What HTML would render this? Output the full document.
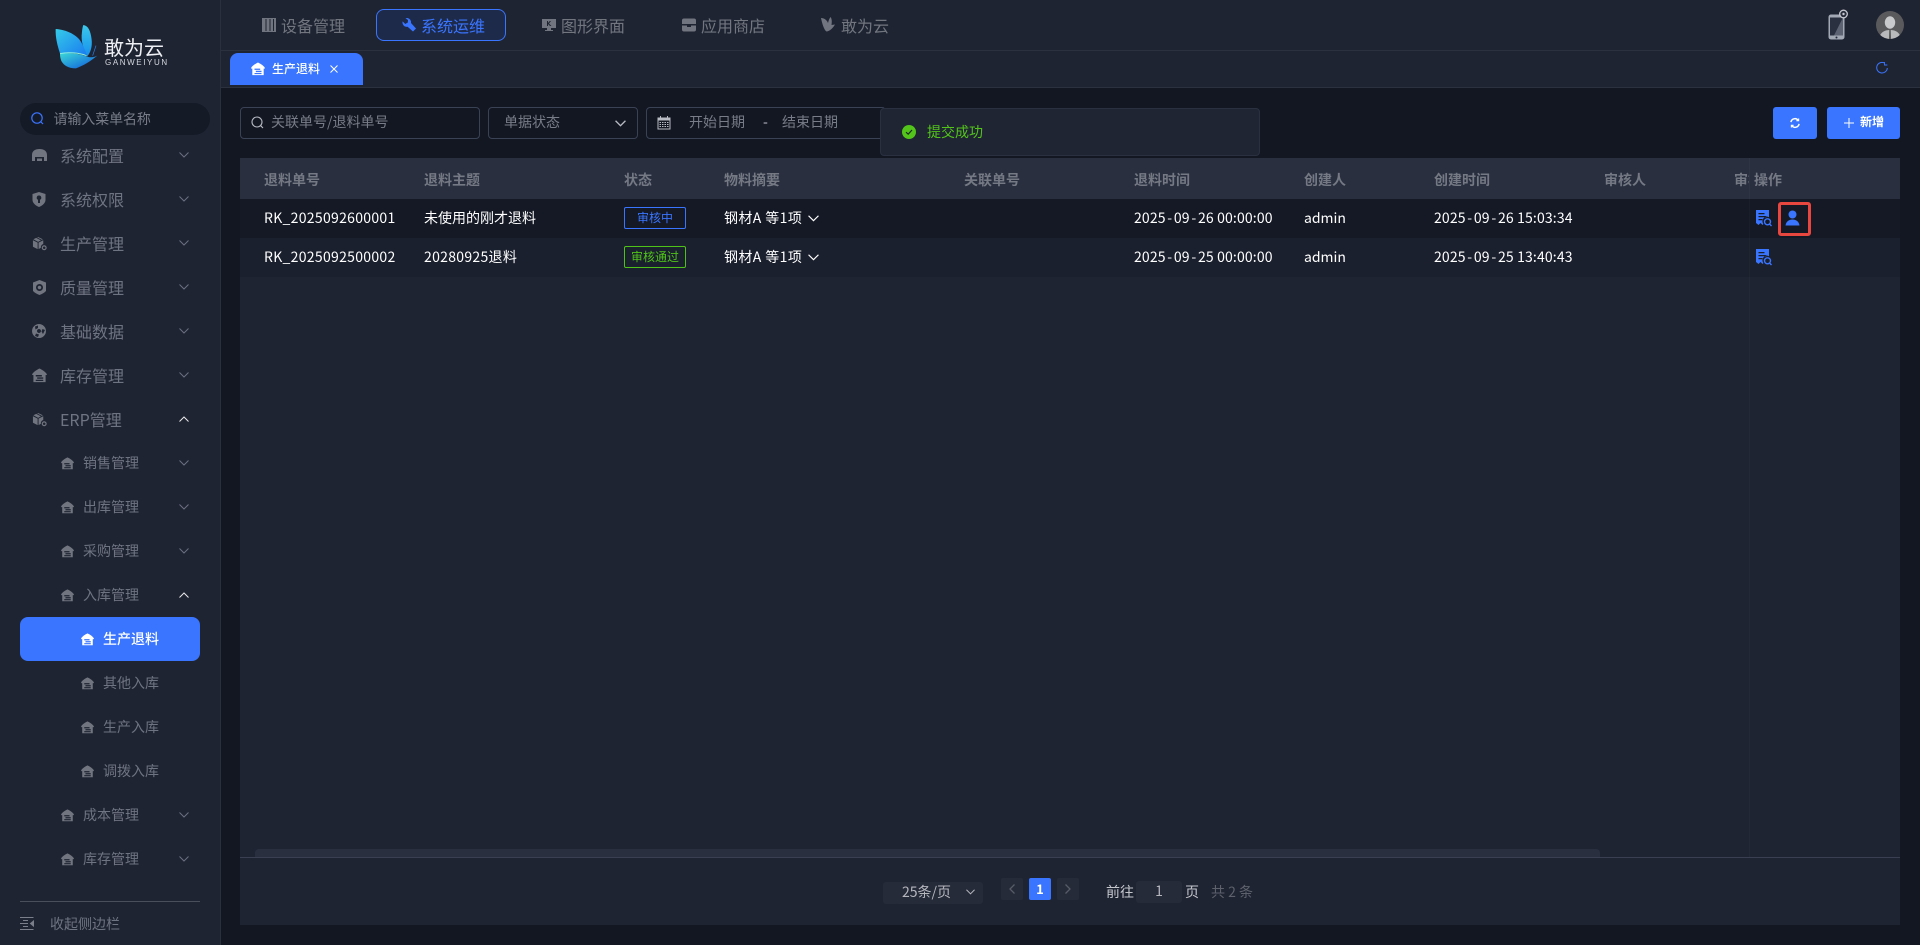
<!DOCTYPE html>
<html lang="zh-CN">
<head>
<meta charset="utf-8">
<title>生产退料</title>
<style>
html,body{margin:0;padding:0;width:1920px;height:945px;overflow:hidden;background:#131722;font-family:"Noto Sans CJK SC","Liberation Sans",sans-serif;font-size:14px;color:#fff}
div,span,svg{position:absolute;box-sizing:border-box}
i{font-style:normal;padding:0 1.6px}
.t{white-space:nowrap;line-height:20px;height:20px}
.m{color:#6f7482}
.m16{font-size:16px;color:#6f7482;left:60px}
.m14{font-size:14px;color:#6f7482;left:83px}
.h{font-size:14px;color:#747984;top:170px;font-weight:700}
.r{font-size:14px;color:#fff}
.dt{letter-spacing:.15px}
.ls{letter-spacing:.3px}
.n{font-size:16px;color:#71767f;top:15px}
.ph{color:#777c88}
svg{overflow:visible}
.ch{fill:none;stroke:#6b7080;stroke-width:1;width:10px;height:6px}
.ic{fill:#71757f}
.tag{height:22px;line-height:20px;font-size:12px;text-align:center;border-radius:2px;left:624px;width:62px;border:1px solid}
.inp{border:1px solid #3a4256;border-radius:4px;height:32px;top:107px}
.btn{background:#3a75ff;border-radius:3px;height:32px;top:107px}
</style>
</head>
<body>
<svg width="0" height="0" style="left:0;top:0">
<defs>
<symbol id="home" viewBox="0 0 16 16"><path fill-rule="evenodd" d="M8 0.5 C10 1.5 14 3.5 15.8 6.5 L15.8 7.5 L14.5 7.5 L14.5 15 L1.5 15 L1.5 7.5 L0.2 7.5 L0.2 6.5 C2 3.5 6 1.5 8 0.5Z M4 7.5 L4 9 L10.5 9 L10.5 7.5Z M5.5 10 L5.5 11.5 L12 11.5 L12 10Z M4 12.5 L4 13.8 L12 13.8 L12 12.5Z"/></symbol>
<symbol id="box" viewBox="0 0 16 16"><path d="M1 4.5 L6 7 L6 14 L1 11.5Z M7 7 L12 4.5 L12 8.5 A3.5 3.5 0 0 0 9.5 12.5 L7 14Z M1.5 3.5 L4.5 2 L9.5 4.6 L6.5 6.2Z M5.5 1.5 L6.5 1 L11.5 3.5 L10.5 4.1Z"/><circle cx="13" cy="12.5" r="2" fill="none" stroke="currentColor" stroke-width="1.3"/></symbol>
<symbol id="doc" viewBox="0 0 16 17"><path fill="#3a75ff" fill-rule="evenodd" d="M0 0 L13 0 L13 7.2 A4.5 4.5 0 0 0 7.4 14 L6.5 15 L4.5 13 L2.5 15 L0 13Z M2.5 3 L2.5 4.3 L8.5 4.3 L8.5 3Z M2.5 6 L2.5 7.3 L10.5 7.3 L10.5 6Z M2.5 9 L2.5 10.3 L6.5 10.3 L6.5 9Z"/><circle cx="11.5" cy="11.8" r="3" fill="none" stroke="#3a75ff" stroke-width="1.4"/><path d="M13.6 14 L15.5 16" stroke="#3a75ff" stroke-width="1.4"/></symbol>
<symbol id="cd" viewBox="0 0 10 6"><path d="M0.5 0.5 L5 5 L9.5 0.5"/></symbol>
<symbol id="cu" viewBox="0 0 10 6"><path d="M0.5 5.5 L5 1 L9.5 5.5"/></symbol>
<linearGradient id="g1" x1="0" y1="0" x2="1" y2="1"><stop offset="0" stop-color="#35cbe8"/><stop offset="1" stop-color="#1a7cf0"/></linearGradient>
<linearGradient id="g2" x1="0" y1="0" x2="0" y2="1"><stop offset="0" stop-color="#3cc8ea"/><stop offset="1" stop-color="#1590ee"/></linearGradient>
<linearGradient id="g3" x1="0" y1="0" x2="1" y2="1"><stop offset="0" stop-color="#3bd8d8"/><stop offset="1" stop-color="#0d55dc"/></linearGradient>
</defs>
</svg>

<!-- sidebar -->
<div style="left:0;top:0;width:221px;height:945px;background:#1f2433;border-right:1px solid #2b3040"></div>
<svg style="left:40px;top:15px" width="140" height="70" viewBox="0 0 420 210">
<path fill="url(#g2)" d="M130 30 C145 32 152 48 155 75 C157 95 152 112 142 124 C132 105 124 85 125 62 C126 48 127 38 130 30Z"/>
<path fill="url(#g1)" d="M47 42 C80 44 112 60 124 82 C132 98 138 110 140 120 C112 112 82 112 60 115 C52 92 46 66 47 42Z"/>
<path fill="url(#g3)" d="M60 116 C85 112 118 116 140 124 C150 128 160 128 172 122 C150 140 130 152 108 160 C85 160 72 152 64 138 C61 130 60 124 60 116Z"/>
<path d="M60 116 C85 110 118 114 140 122" stroke="#8ff0e2" stroke-width="3" fill="none"/>
<path d="M158 122 L168 92" stroke="#2a7fe8" stroke-width="2" fill="none"/>
</svg>
<span class="t" style="left:104px;top:33px;font-size:20px;line-height:28px;height:28px;color:#eef0f4">敢为云</span>
<span class="t" style="left:105px;top:58px;font-size:8px;line-height:10px;height:10px;letter-spacing:1.6px;color:#d5d8de;font-family:'Liberation Sans',sans-serif">GANWEIYUN</span>

<div style="left:20px;top:103px;width:190px;height:32px;border-radius:16px;background:#151a27"></div>
<svg style="left:31px;top:112px" width="13" height="13" viewBox="0 0 13 13" fill="none" stroke="#3a75ff" stroke-width="1.2"><circle cx="6" cy="6" r="5.2"/><path d="M10 10 L12 12"/></svg>
<span class="t ph" style="left:53.5px;top:109px;letter-spacing:-.1px">请输入菜单名称</span>

<!-- top-level menu -->
<svg class="ic" style="left:32px;top:149px" width="15" height="14" viewBox="0 0 15 14"><path fill-rule="evenodd" d="M0 12 L0 6 C0 2 3 0 7.5 0 C12 0 15 2 15 6 L15 12 L12 12 L12 8 L3 8 L3 12Z M5 9.5 L10 9.5 L10 12 L5 12Z"/></svg>
<span class="t m16" style="top:145px">系统配置</span>
<svg class="ch" style="left:179px;top:152px"><use href="#cd"/></svg>

<svg class="ic" style="left:32px;top:192px" width="14" height="15" viewBox="0 0 14 15"><path fill-rule="evenodd" d="M7 0 L13.5 2 L13.5 8 C13.5 11 10 14 7 15 C4 14 0.5 11 0.5 8 L0.5 2Z M7 3.5 A2.2 2.2 0 0 0 6 7.7 L6 11 L8 11 L8 7.7 A2.2 2.2 0 0 0 7 3.5Z"/></svg>
<span class="t m16" style="top:189px">系统权限</span>
<svg class="ch" style="left:179px;top:196px"><use href="#cd"/></svg>

<svg class="ic" style="left:32px;top:236px;color:#71757f" width="15" height="15"><use href="#box"/></svg>
<span class="t m16" style="top:233px">生产管理</span>
<svg class="ch" style="left:179px;top:240px"><use href="#cd"/></svg>

<svg class="ic" style="left:33px;top:280px" width="13" height="15" viewBox="0 0 13 15"><path fill-rule="evenodd" d="M6.5 0 L13 2.5 L13 11 C11 13 9 14 6.5 15 C4 14 2 13 0 11 L0 2.5Z M6.5 4 A3.5 3.5 0 1 0 6.51 4Z M6.5 5.7 A1.8 1.8 0 1 1 6.49 5.7Z"/></svg>
<span class="t m16" style="top:277px">质量管理</span>
<svg class="ch" style="left:179px;top:284px"><use href="#cd"/></svg>

<svg class="ic" style="left:32px;top:324px" width="14" height="14" viewBox="0 0 14 14"><path fill-rule="evenodd" d="M7 0 A7 7 0 1 0 7.01 0Z M7 5 A2 2 0 1 1 6.99 5Z M3 2.5 L6 1.5 L6 4 L3.5 5.5Z M13 6 L10.5 5 L9.5 7.5 L11 10Z M3 12 L6 13 L7 10.5 L4 9.5Z"/></svg>
<span class="t m16" style="top:321px">基础数据</span>
<svg class="ch" style="left:179px;top:328px"><use href="#cd"/></svg>

<svg class="ic" style="left:32px;top:368px" width="15" height="15"><use href="#home"/></svg>
<span class="t m16" style="top:365px">库存管理</span>
<svg class="ch" style="left:179px;top:372px"><use href="#cd"/></svg>

<svg class="ic" style="left:32px;top:412px;color:#71757f" width="15" height="15"><use href="#box"/></svg>
<span class="t m16" style="top:409px">ERP管理</span>
<svg class="ch" style="left:179px;top:416px;stroke:#e8e8ea"><use href="#cu"/></svg>

<!-- second level -->
<svg class="ic" style="left:61px;top:457px" width="13" height="13"><use href="#home"/></svg>
<span class="t m14" style="top:453px">销售管理</span>
<svg class="ch" style="left:179px;top:460px"><use href="#cd"/></svg>

<svg class="ic" style="left:61px;top:501px" width="13" height="13"><use href="#home"/></svg>
<span class="t m14" style="top:497px">出库管理</span>
<svg class="ch" style="left:179px;top:504px"><use href="#cd"/></svg>

<svg class="ic" style="left:61px;top:545px" width="13" height="13"><use href="#home"/></svg>
<span class="t m14" style="top:541px">采购管理</span>
<svg class="ch" style="left:179px;top:548px"><use href="#cd"/></svg>

<svg class="ic" style="left:61px;top:589px" width="13" height="13"><use href="#home"/></svg>
<span class="t m14" style="top:585px">入库管理</span>
<svg class="ch" style="left:179px;top:592px;stroke:#e8e8ea"><use href="#cu"/></svg>

<!-- third level -->
<div style="left:20px;top:617px;width:180px;height:44px;background:#3a75ff;border-radius:8px"></div>
<svg style="left:81px;top:633px;fill:#fff" width="13" height="13"><use href="#home"/></svg>
<span class="t" style="left:103px;top:629px;color:#fff;font-weight:500">生产退料</span>

<svg class="ic" style="left:81px;top:677px" width="13" height="13"><use href="#home"/></svg>
<span class="t m" style="left:103px;top:673px">其他入库</span>
<svg class="ic" style="left:81px;top:721px" width="13" height="13"><use href="#home"/></svg>
<span class="t m" style="left:103px;top:717px">生产入库</span>
<svg class="ic" style="left:81px;top:765px" width="13" height="13"><use href="#home"/></svg>
<span class="t m" style="left:103px;top:761px">调拨入库</span>

<svg class="ic" style="left:61px;top:809px" width="13" height="13"><use href="#home"/></svg>
<span class="t m14" style="top:805px">成本管理</span>
<svg class="ch" style="left:179px;top:812px"><use href="#cd"/></svg>
<svg class="ic" style="left:61px;top:853px" width="13" height="13"><use href="#home"/></svg>
<span class="t m14" style="top:849px">库存管理</span>
<svg class="ch" style="left:179px;top:856px"><use href="#cd"/></svg>

<div style="left:20px;top:901px;width:180px;height:1px;background:#4a4f5c"></div>
<svg style="left:20px;top:917px" width="14" height="13" viewBox="0 0 14 13" fill="none" stroke="#7a7f8b" stroke-width="1"><path d="M0 .5 H13.5 M0 6.5 H8 M0 12.5 H13.5 M3 3.5 H8 M3 9.5 H8"/><path d="M13.5 4 L10.5 6.5 L13.5 9Z" fill="#7a7f8b"/></svg>
<span class="t m" style="left:50px;top:914px">收起侧边栏</span>

<!-- top bar -->
<div style="left:221px;top:0;width:1699px;height:87px;background:#1f2433"></div>
<div style="left:221px;top:50px;width:1699px;height:1px;background:#2c3140"></div>
<div style="left:221px;top:87px;width:1699px;height:1px;background:#2c3140"></div>

<svg class="ic" style="left:262px;top:18px" width="14" height="14" viewBox="0 0 14 14"><path fill-rule="evenodd" d="M0 0 H14 V14 H0Z M3.5 1 V13 H4.5 V1Z M7.5 1 V13 H8.5 V1Z M11 1 V13 H12 V1Z"/></svg>
<span class="t n" style="left:281px">设备管理</span>

<div style="left:376px;top:9px;width:130px;height:32px;border:1px solid #3a75ff;border-radius:8px;background:#1e2a49"></div>
<svg style="left:402px;top:18px" width="14" height="14" viewBox="0 0 14 14"><path fill="#3a75ff" d="M5.5 0 A4.4 4.4 0 0 1 9 5 L14 10.5 L11 13.5 L5.6 8.8 A4.4 4.4 0 0 1 .6 3.4 L3.3 6 L5.8 4.5 L6 2 L3.5 .4 A4 4 0 0 1 5.5 0Z"/></svg>
<span class="t n" style="left:421px;color:#3a75ff">系统运维</span>

<svg class="ic" style="left:542px;top:18px" width="14" height="14" viewBox="0 0 14 14"><path fill-rule="evenodd" d="M0 1 H14 V10 H9 V12 H11 V13 H3 V12 H5 V10 H0Z M5 3 V8 H6 V6 L8 8 H9.5 L7 5.5 L9 3 H7.8 L6 5 V3Z"/></svg>
<span class="t n" style="left:561px">图形界面</span>

<svg class="ic" style="left:682px;top:18px" width="14" height="14" viewBox="0 0 14 14"><path d="M2 0.5 H12 A2 2 0 0 1 14 2.5 V6 H0 V2.5 A2 2 0 0 1 2 0.5Z M0 7.5 H5 V9 H9 V7.5 H14 V11.5 A2 2 0 0 1 12 13.5 H2 A2 2 0 0 1 0 11.5Z"/></svg>
<span class="t n" style="left:701px">应用商店</span>

<svg class="ic" style="left:821px;top:17px" width="15" height="15" viewBox="0 0 15 15"><path d="M0 1 C3 1 6 3 7 6 C7.5 4 8 2 9.5 0 C11 2 11 5 10.5 8 L14 7.5 C12 11 9 14 5.5 14.5 C3 13 1 6 0 1Z"/></svg>
<span class="t n" style="left:841px">敢为云</span>

<svg style="left:1827px;top:10px" width="22" height="31" viewBox="0 0 22 31"><rect x="1.5" y="4.5" width="16" height="25" rx="2.5" fill="#a3a8b5"/><rect x="3" y="7.5" width="13" height="18" fill="#2a3040"/><path d="M16 7.5 V25.5 H7Z" fill="#5d6372"/><circle cx="9.5" cy="27.5" r="1" fill="#22283a"/><circle cx="16.5" cy="4" r="3.8" fill="#2a2f3d" stroke="#c5c8cf" stroke-width="1.3"/><circle cx="16.5" cy="4" r="1.2" fill="#c5c8cf"/></svg>
<svg style="left:1876px;top:11px" width="28" height="28" viewBox="0 0 28 28"><defs><clipPath id="av"><circle cx="14" cy="14" r="14"/></clipPath></defs><circle cx="14" cy="14" r="14" fill="#5a5a5c"/><g clip-path="url(#av)"><ellipse cx="14" cy="11.5" rx="5.2" ry="6.2" fill="#c9cacc"/><path d="M3 28 C4 21 9 19 14 19 C19 19 24 21 25 28Z" fill="#b9babc"/><path d="M13.3 19 H14.7 L15 28 H13Z" fill="#555"/></g></svg>

<!-- tab -->
<div style="left:230px;top:53px;width:133px;height:32px;background:#3a75ff;border-radius:8px 8px 0 0"></div>
<svg style="left:251px;top:62px;fill:#fff" width="14" height="14"><use href="#home"/></svg>
<span class="t" style="left:272px;top:59px;font-size:12px;color:#fff;font-weight:500">生产退料</span>
<svg style="left:330px;top:65px" width="8" height="8" viewBox="0 0 8 8" stroke="#fff" stroke-width="1"><path d="M.5 .5 L7.5 7.5 M7.5 .5 L.5 7.5"/></svg>
<svg style="left:1876px;top:62px" width="12" height="12" viewBox="0 0 12 12" fill="none" stroke="#3a75ff" stroke-width="1"><path d="M8.5 1 A5.3 5.3 0 1 0 11.3 6"/><path d="M8.5 0 V3 H11.3" stroke-width=".9"/></svg>

<!-- filters -->
<div class="inp" style="left:240px;width:240px"></div>
<svg style="left:251px;top:116px" width="13" height="13" viewBox="0 0 13 13" fill="none" stroke="#b8bbc3" stroke-width="1.1"><circle cx="6" cy="6" r="5"/><path d="M9.7 9.7 L12 12"/></svg>
<span class="t ph" style="left:271px;top:112px">关联单号/退料单号</span>

<div class="inp" style="left:488px;width:150px"></div>
<span class="t ph" style="left:504px;top:112px">单据状态</span>
<svg style="left:615px;top:120px;fill:none;stroke:#b8bbc3;stroke-width:1.2" width="11" height="7"><use href="#cd"/></svg>

<div class="inp" style="left:646px;width:240px"></div>
<svg style="left:657px;top:116px" width="14" height="14" viewBox="0 0 14 14"><path fill="#b8bbc3" fill-rule="evenodd" d="M3 0 H4 V1.5 H10 V0 H11 V1.5 H13.5 V13.5 H.5 V1.5 H3Z M1.5 4.5 V12.5 H12.5 V4.5Z"/><path stroke="#b8bbc3" stroke-dasharray="1.5 1" d="M2.5 6.5 H11.5 M2.5 8.5 H11.5 M2.5 10.5 H11.5"/></svg>
<span class="t ph" style="left:689px;top:112px">开始日期</span>
<span class="t" style="left:763px;top:112px;color:#c5c7cc">-</span>
<span class="t ph" style="left:782px;top:112px">结束日期</span>

<div class="btn" style="left:1773px;width:44px"></div>
<svg style="left:1790px;top:118px" width="10" height="10" viewBox="0 0 11 11" fill="none" stroke="#fff" stroke-width="1.6"><path d="M1 4.5 A4.5 4.5 0 0 1 9 2.5 M10 6.5 A4.5 4.5 0 0 1 2 8.5"/><path d="M9.5 0.5 V3 H7 M1.5 10.5 V8 H4" stroke-width="1.2"/></svg>
<div class="btn" style="left:1827px;width:73px"></div>
<svg style="left:1844px;top:118px" width="10" height="10" viewBox="0 0 10 10" stroke="#fff" stroke-width="1"><path d="M5 0 V10 M0 5 H10"/></svg>
<span class="t" style="left:1860px;top:112px;font-size:12px;color:#fff;font-weight:700">新增</span>

<!-- table panel -->
<div style="left:240px;top:158px;width:1660px;height:767px;background:#1f2433"></div>
<div style="left:240px;top:158px;width:1660px;height:41px;background:#2a2f40"></div>
<div style="left:240px;top:199px;width:1660px;height:39px;background:#141925"></div>
<div style="left:240px;top:238px;width:1660px;height:39px;background:#1b202e"></div>
<div style="left:1749px;top:158px;width:1px;height:699px;background:rgba(255,255,255,.025)"></div>

<span class="t h" style="left:264px">退料单号</span>
<span class="t h" style="left:424px">退料主题</span>
<span class="t h" style="left:624px">状态</span>
<span class="t h" style="left:724px">物料摘要</span>
<span class="t h" style="left:964px">关联单号</span>
<span class="t h" style="left:1134px">退料时间</span>
<span class="t h" style="left:1304px">创建人</span>
<span class="t h" style="left:1434px">创建时间</span>
<span class="t h" style="left:1604px">审核人</span>
<div class="h" style="left:1734px;width:15px;height:20px;overflow:hidden;line-height:20px;white-space:nowrap">审核时间</div>
<span class="t h" style="left:1754px">操作</span>

<span class="t r ls" style="left:264px;top:208px">RK_2025092600001</span>
<span class="t r" style="left:424px;top:208px">未使用的刚才退料</span>
<div class="tag" style="top:207px;border-color:#3a75ff;color:#3a75ff">审核中</div>
<span class="t r ls" style="left:724px;top:208px;letter-spacing:.4px">钢材A 等1项</span>
<svg style="left:808px;top:215px;fill:none;stroke:#fff;stroke-width:1.1" width="11" height="7"><use href="#cd"/></svg>
<span class="t r dt" style="left:1134px;top:208px">2025<i>-</i>09<i>-</i>26 00:00:00</span>
<span class="t r" style="left:1304px;top:208px">admin</span>
<span class="t r dt" style="left:1434px;top:208px">2025<i>-</i>09<i>-</i>26 15:03:34</span>
<svg style="left:1756px;top:210px" width="16" height="17"><use href="#doc"/></svg>
<div style="left:1778px;top:202px;width:33px;height:34px;border:3px solid #e8473f;border-radius:3px"></div>
<svg style="left:1785px;top:210px" width="15" height="16" viewBox="0 0 15 16"><circle cx="7.5" cy="4.5" r="4" fill="#3a75ff"/><path fill="#3a75ff" d="M0.5 15.5 C1 11.5 4 9.5 7.5 9.5 C11 9.5 14 11.5 14.5 15.5Z"/></svg>

<span class="t r ls" style="left:264px;top:247px">RK_2025092500002</span>
<span class="t r ls" style="left:424px;top:247px">20280925退料</span>
<div class="tag" style="top:246px;border-color:#4fc21a;color:#4fc21a">审核通过</div>
<span class="t r ls" style="left:724px;top:247px;letter-spacing:.4px">钢材A 等1项</span>
<svg style="left:808px;top:254px;fill:none;stroke:#fff;stroke-width:1.1" width="11" height="7"><use href="#cd"/></svg>
<span class="t r dt" style="left:1134px;top:247px">2025<i>-</i>09<i>-</i>25 00:00:00</span>
<span class="t r" style="left:1304px;top:247px">admin</span>
<span class="t r dt" style="left:1434px;top:247px">2025<i>-</i>09<i>-</i>25 13:40:43</span>
<svg style="left:1756px;top:249px" width="16" height="17"><use href="#doc"/></svg>

<!-- toast -->
<div style="left:880px;top:108px;width:380px;height:48px;background:#202534;border:1px solid #2b3040;border-radius:4px"></div>
<svg style="left:902px;top:125px" width="14" height="14" viewBox="0 0 14 14"><circle cx="7" cy="7" r="7" fill="#52c41a"/><path d="M4 7.2 L6.2 9.2 L10 5" fill="none" stroke="#1c2a20" stroke-width="1.2"/></svg>
<span class="t" style="left:927px;top:122px;color:#52c41a">提交成功</span>

<!-- scrollbar + pager -->
<div style="left:255px;top:849px;width:1345px;height:8px;background:#2a2f40;border-radius:4px 4px 0 0"></div>
<div style="left:240px;top:857px;width:1660px;height:1px;background:#3a4052"></div>

<div style="left:883px;top:882px;width:100px;height:22px;background:#262b3a;border-radius:3px"></div>
<span class="t" style="left:902px;top:882px;color:#b5b7bd">25条/页</span>
<svg style="left:966px;top:889px;fill:none;stroke:#b5b7bd;stroke-width:1.1" width="9" height="6"><use href="#cd"/></svg>

<div style="left:1001px;top:878px;width:22px;height:22px;background:#262b3a;border-radius:2px"></div>
<svg style="left:1009px;top:884px" width="6" height="10" viewBox="0 0 6 10" fill="none" stroke="#585c68" stroke-width="1.3"><path d="M5.5 .5 L1 5 L5.5 9.5"/></svg>
<div style="left:1029px;top:878px;width:22px;height:22px;background:#3a75ff;border-radius:2px;text-align:center;line-height:22px;font-size:13px;font-weight:700;color:#fff">1</div>
<div style="left:1057px;top:878px;width:22px;height:22px;background:#262b3a;border-radius:2px"></div>
<svg style="left:1065px;top:884px" width="6" height="10" viewBox="0 0 6 10" fill="none" stroke="#585c68" stroke-width="1.3"><path d="M.5 .5 L5 5 L.5 9.5"/></svg>

<span class="t" style="left:1106px;top:882px;color:#c5c7cc">前往</span>
<div style="left:1136px;top:881px;width:46px;height:22px;background:#262b3a;border-radius:3px;text-align:center;line-height:21px;color:#b5b7bd">1</div>
<span class="t" style="left:1185px;top:882px;color:#c5c7cc">页</span>
<span class="t" style="left:1211px;top:882px;color:#5d616c">共 2 条</span>
</body>
</html>
